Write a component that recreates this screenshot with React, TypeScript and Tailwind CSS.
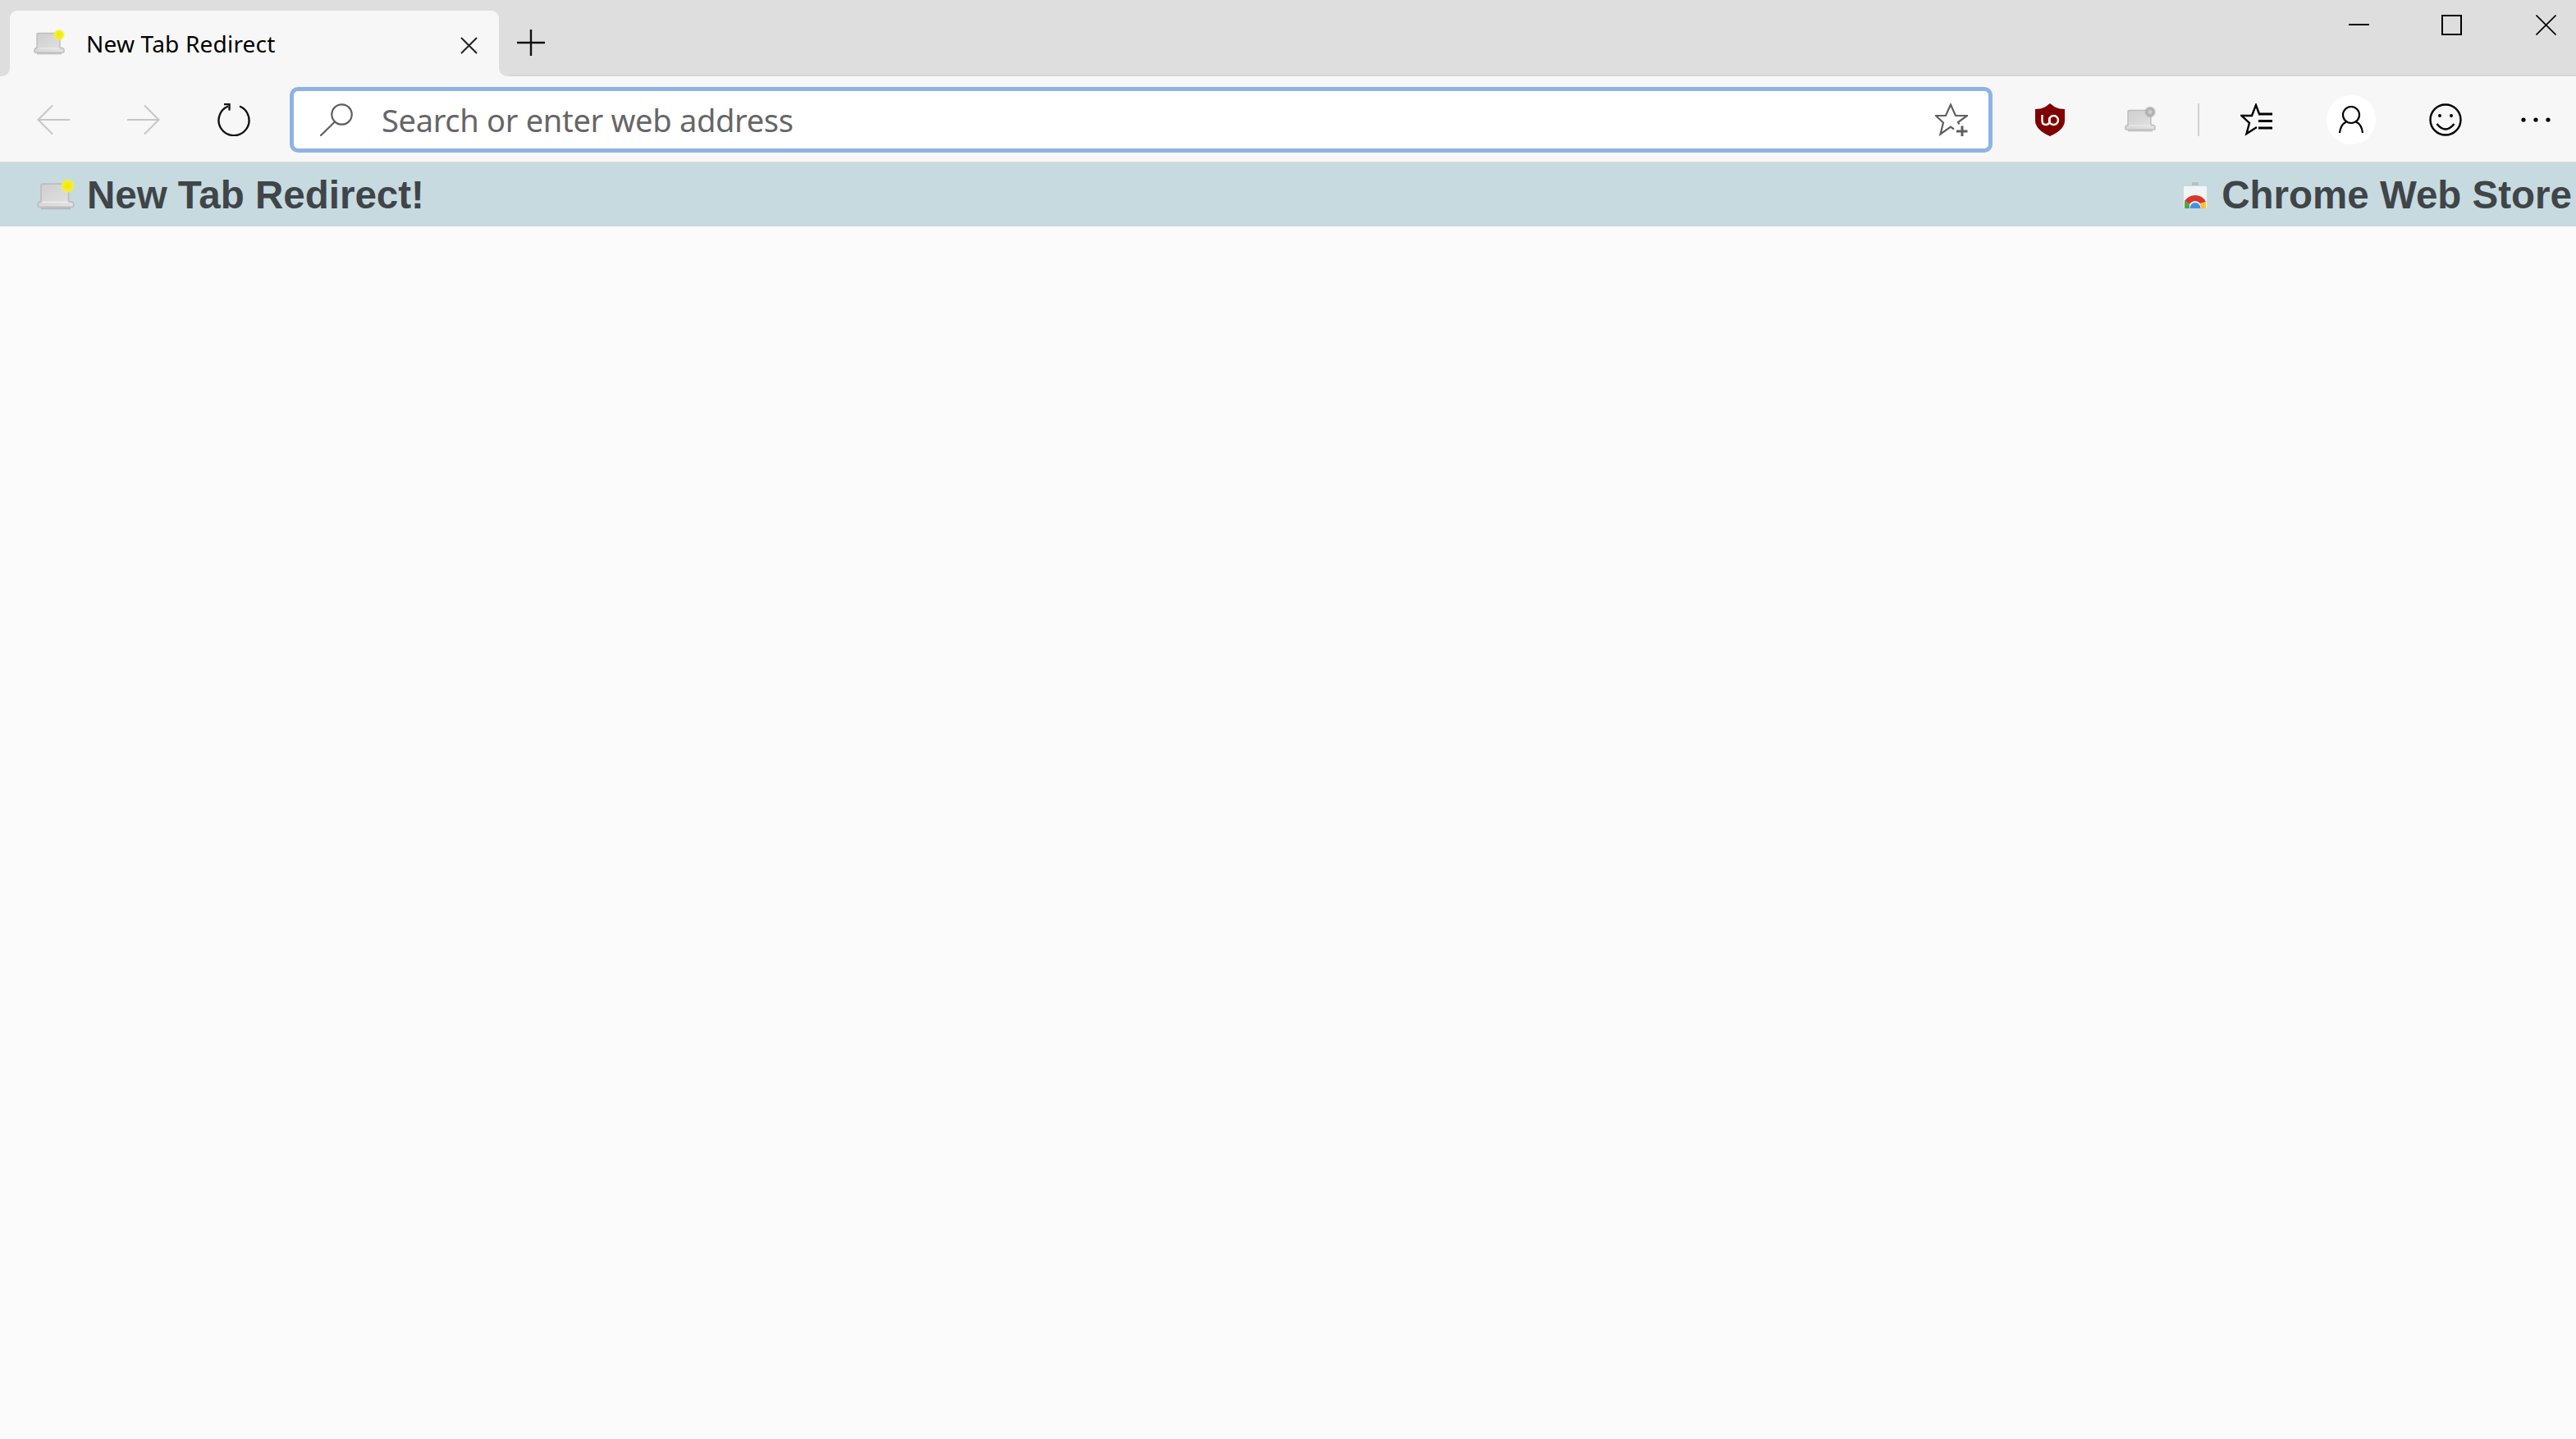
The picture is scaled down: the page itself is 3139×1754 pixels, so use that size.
const NoteIcon = ({ className, glow = true, id }: { className: string; glow?: boolean; id: string }) => (
  <svg viewBox="0 0 40 30" className={`overflow-visible blur-[0.5px] ${className}`}>
    <defs>
      <linearGradient id={id} x1="0" y1="0" x2="1" y2="1">
        <stop offset="0" stopColor="#cdcdcd" />
        <stop offset="1" stopColor="#e4e4e4" />
      </linearGradient>
      <radialGradient id={`${id}-glow`}>
        <stop offset="0" stopColor={glow ? "#efea00" : "#d8d8d8"} />
        <stop offset="0.65" stopColor={glow ? "#f4ef20" : "#a8a8a8"} />
        <stop offset="1" stopColor={glow ? "#f8f45c" : "#c0c0c0"} stopOpacity="0" />
      </radialGradient>
    </defs>
    <path d="M5 5Q5 3.5 7 3.5H33V21.5H36L38 23V26Q38 27 37 27H3Q2 27 2 26V23L4 21.5H5Z" fill={`url(#${id})`} stroke="#bdbdbd" strokeWidth="1.4" />
    <path d="M6 22H33" stroke="#f0f0f0" strokeWidth="1" />
    <path d="M5 28.5H35" stroke="#aaaaaa" strokeWidth="1.6" opacity="0.7" />
    <circle cx="32" cy="5.5" r="7.5" fill={`url(#${id}-glow)`} />
  </svg>
);

const StoreIcon = () => (
  <svg viewBox="0 0 32 34" className="h-[34px] w-[32px] blur-[0.5px]">
    <rect x="12" y="1" width="8" height="4" fill="#b9c0c3" />
    <rect x="2" y="6" width="28" height="27" fill="#f1f5f6" />
    <path d="M3 24Q8 17 16 17Q25 17 29 25L22 27Q19 24 16 24Q12 24 9 28Z" fill="#d8362a" />
    <path d="M3 24L9 28V33H3Z" fill="#4aa84a" />
    <path d="M22 27L29 25V33H23Z" fill="#f4c430" />
    <path d="M9.5 33A6.5 7 0 0 1 22.5 33Z" fill="#4a90e2" />
  </svg>
);

const Shield = () => (
  <svg viewBox="0 0 36 40" className="h-[40px] w-[36px]">
    <path d="M18 0L24 4.5Q29 7 36 7V21Q36 32 18 40Q0 32 0 21V7Q7 7 12 4.5Z" fill="#800000" />
    <path d="M8.5 14V21Q8.5 26 13 26Q17.5 26 17.5 21V17" fill="none" stroke="#fff" strokeWidth="2.4" />
    <circle cx="22.5" cy="20.5" r="5.5" fill="none" stroke="#fff" strokeWidth="2.4" />
  </svg>
);

const ToolBtn = ({ children, className = "w-[110px]" }: { children: React.ReactNode; className?: string }) => (
  <div className={`flex h-[60px] shrink-0 items-center justify-center ${className}`}>{children}</div>
);

const App = () => (
  <div className="flex min-h-[1754px] w-[3139px] flex-col overflow-hidden bg-[#fbfbfb]">
    {/* tab strip */}
    <div className="flex h-[93px] items-end border-b-2 border-[#d6d6d6] bg-[#dedede] pl-[12px]">
      <div className="relative z-10 -mb-[2px] flex h-[80px] w-[596px] items-center rounded-t-[9px] bg-[#f7f7f7] pl-[28px]">
        <span className="absolute -left-[12px] bottom-0 h-[12px] w-[12px] bg-[#f7f7f7]">
          <span className="block h-full w-full rounded-br-[10px] bg-[#dedede]" />
        </span>
        <span className="absolute -right-[12px] bottom-0 h-[12px] w-[12px] bg-[#f7f7f7]">
          <span className="block h-full w-full rounded-bl-[10px] bg-[#dedede]" />
        </span>
        <NoteIcon id="tabicon" className="-mt-[2px] h-[30px] w-[40px]" />
        <span className="ml-[25px] font-['Noto_Sans',sans-serif] text-[28px] leading-[36px] tracking-[0.2px] text-black">New Tab Redirect</span>
        <svg viewBox="0 0 21 21" className="absolute left-[549px] top-[32px] h-[21px] w-[21px]" stroke="#222" strokeWidth="2" fill="none">
          <path d="M1 1L20 20M20 1L1 20" />
        </svg>
      </div>
      <svg viewBox="0 0 34 32" className="mb-[23px] ml-[22px] h-[32px] w-[34px]" stroke="#111" strokeWidth="2.4" fill="none">
        <path d="M0 16H34M17 0V32" />
      </svg>
      <div className="mb-[48px] ml-auto flex items-center pr-[24px]">
        <svg viewBox="0 0 25 25" className="h-[25px] w-[25px]" stroke="#000" strokeWidth="2" fill="none">
          <path d="M0 12H25" />
        </svg>
        <svg viewBox="0 0 25 25" className="ml-[88px] h-[25px] w-[25px]" stroke="#000" strokeWidth="2" fill="none">
          <rect x="1" y="1" width="23" height="23" />
        </svg>
        <svg viewBox="0 0 25 25" className="ml-[90px] h-[25px] w-[25px]" stroke="#000" strokeWidth="1.6" fill="none">
          <path d="M0.5 0.5L24.5 24.5M24.5 0.5L0.5 24.5" />
        </svg>
      </div>
    </div>

    {/* toolbar */}
    <div className="flex h-[106px] items-center border-b-2 border-[#d9d9d9] bg-[#f7f7f7] pl-[10px] pt-[2px]">
      <ToolBtn>
        <svg viewBox="0 0 40 36" className="h-[36px] w-[40px]" stroke="#c6c6c6" strokeWidth="2" fill="none">
          <path d="M40 18H1M19 0.5L1.5 18L19 35.5" />
        </svg>
      </ToolBtn>
      <ToolBtn>
        <svg viewBox="0 0 40 36" className="h-[36px] w-[40px]" stroke="#c6c6c6" strokeWidth="2" fill="none">
          <path d="M0 18H39M21 0.5L38.5 18L21 35.5" />
        </svg>
      </ToolBtn>
      <ToolBtn>
        <svg viewBox="0 0 40 40" className="h-[40px] w-[40px]" stroke="#111" strokeWidth="2.4" fill="none">
          <path d="M13 3.5A18.5 18.5 0 1 0 27 3.5" />
          <path d="M8 1H14.5V8.5" />
        </svg>
      </ToolBtn>
      <div className="ml-[13px] flex h-[80px] w-[2075px] items-center rounded-[10px] border-[5px] border-[#8fb2e6] bg-white pl-[32px]">
        <svg viewBox="0 0 40 40" className="h-[40px] w-[40px]" stroke="#5f5f5f" strokeWidth="2.2" fill="none">
          <circle cx="26.5" cy="13.5" r="12.2" />
          <path d="M18 22.5L1 39" strokeLinecap="round" />
        </svg>
        <span className="ml-[35px] font-['Noto_Sans',sans-serif] text-[38px] leading-[50px] tracking-[-0.3px] text-[#666]">Search or enter web address</span>
        <svg viewBox="0 0 40 40" className="ml-auto mr-[25px] h-[40px] w-[40px]" stroke="#5f5f5f" strokeWidth="2.2" fill="none">
          <path d="M29.5 25.5L28 23L39 15H25L19 1.5L13 15H1L10 23.5L6.5 37.5L19 28.5L23 31.5" />
          <path d="M26 34H39.5M33 27.5V40" strokeWidth="3" />
        </svg>
      </div>
      <ToolBtn className="ml-[15px] w-[110px]">
        <Shield />
      </ToolBtn>
      <ToolBtn>
        <NoteIcon id="exticon" glow={false} className="h-[30px] w-[40px]" />
      </ToolBtn>
      <div className="ml-[15px] h-[40px] w-[2px] shrink-0 bg-[#d2d2d2]" />
      <ToolBtn className="ml-[15px] w-[110px]">
        <svg viewBox="0 0 40 40" className="h-[40px] w-[40px]" stroke="#000" strokeWidth="2.4" fill="none">
          <path d="M20 29L7.5 37L11 24L1.5 15H14L19 2L23 13" />
          <path d="M22 13H39M22 21.5H39M22 30H39" strokeWidth="2.8" />
        </svg>
      </ToolBtn>
      <ToolBtn className="ml-[30px] w-[60px]">
        <div className="flex h-[60px] w-[60px] items-center justify-center rounded-full bg-white">
          <svg viewBox="0 0 30 34" className="h-[34px] w-[30px]" stroke="#000" strokeWidth="2.2" fill="none">
            <circle cx="15" cy="11" r="10" />
            <path d="M1 33Q2 23 9 19.5M29 33Q28 23 21 19.5" />
          </svg>
        </div>
      </ToolBtn>
      <ToolBtn className="ml-[55px] w-[60px]">
        <svg viewBox="0 0 40 40" className="h-[40px] w-[40px]" stroke="#000" strokeWidth="2.4" fill="none">
          <circle cx="20" cy="20" r="18.5" />
          <circle cx="13" cy="15" r="2" fill="#000" stroke="none" />
          <circle cx="27" cy="15" r="2" fill="#000" stroke="none" />
          <path d="M9.5 25Q20 38 30.5 25" />
        </svg>
      </ToolBtn>
      <ToolBtn className="ml-[50px] w-[60px]">
        <svg viewBox="0 0 36 6" className="h-[6px] w-[36px]" fill="#000">
          <circle cx="3" cy="3" r="2.6" />
          <circle cx="18" cy="3" r="2.6" />
          <circle cx="33" cy="3" r="2.6" />
        </svg>
      </ToolBtn>
    </div>

    {/* banner */}
    <div className="flex h-[77px] items-center justify-between bg-[#c7dae0] pl-[44px] pr-[5px] font-['Liberation_Sans',Arial,sans-serif] text-[47.5px] font-bold leading-[56px] text-[#3f4548]">
      <div className="flex items-center">
        <NoteIcon id="bannericon" className="h-[36px] w-[48px]" />
        <span className="ml-[14px]">New Tab Redirect!</span>
      </div>
      <div className="flex items-center">
        <StoreIcon />
        <span className="ml-[16px]">Chrome Web Store</span>
      </div>
    </div>
  </div>
);

export default App;
